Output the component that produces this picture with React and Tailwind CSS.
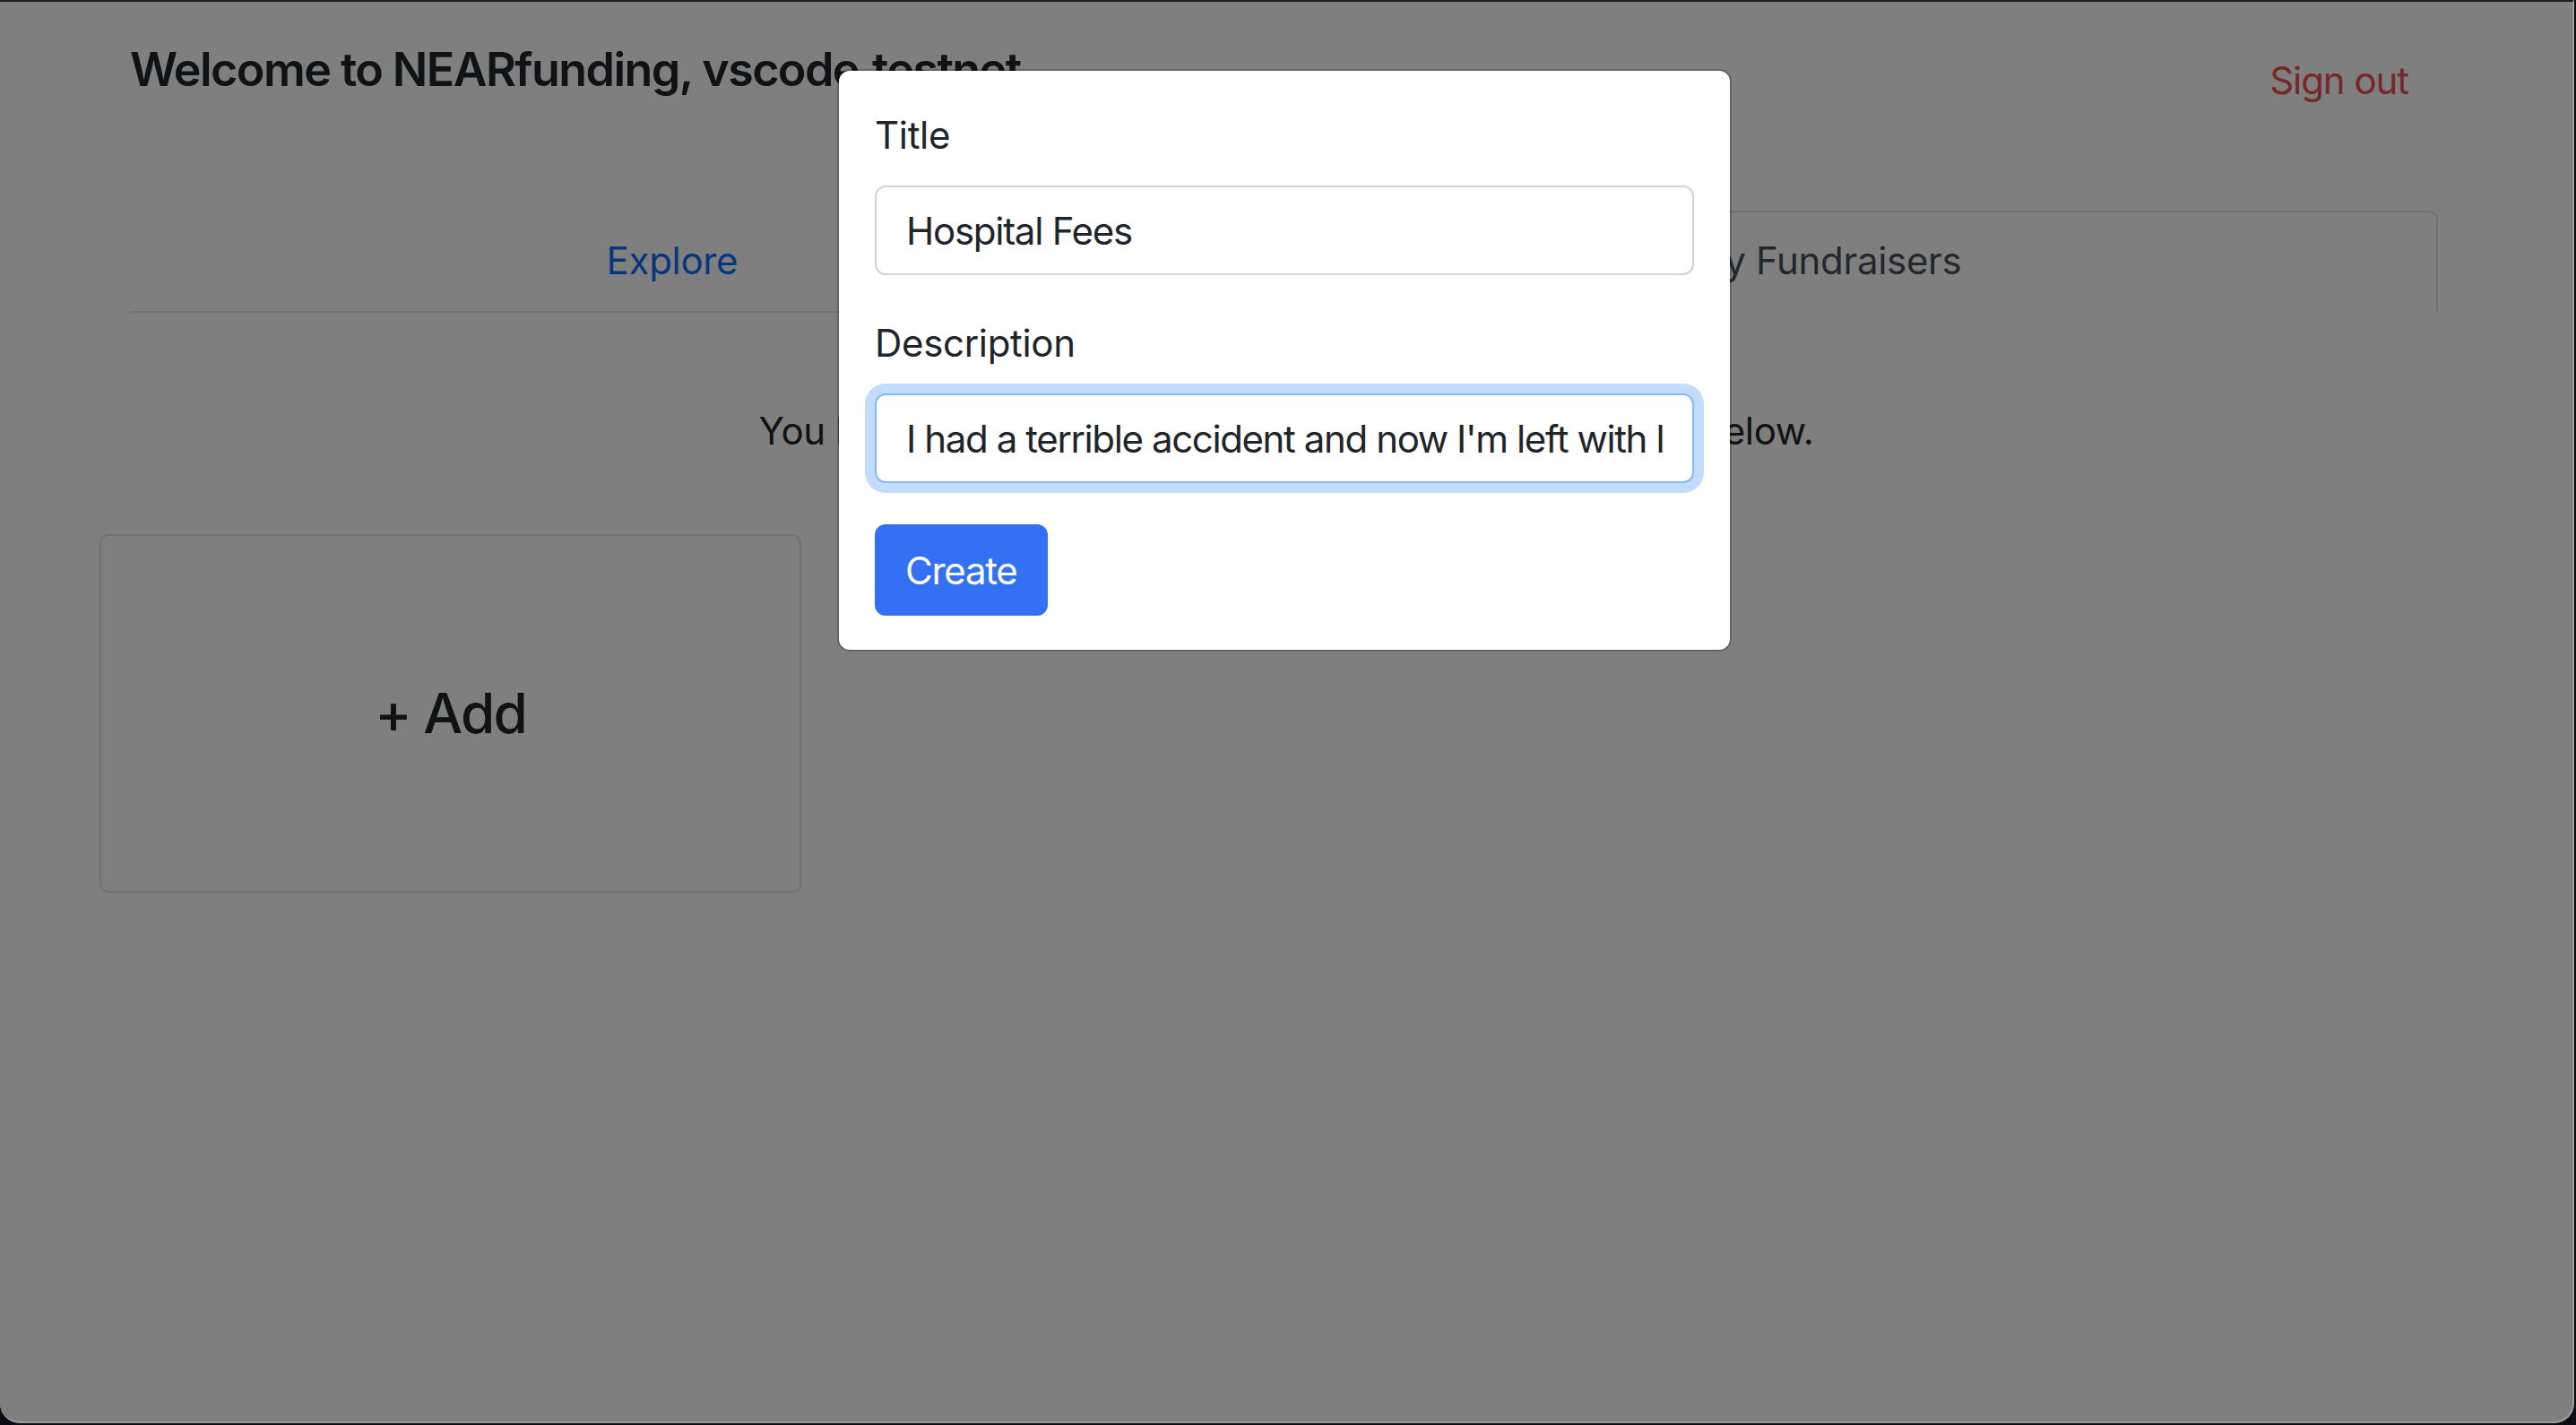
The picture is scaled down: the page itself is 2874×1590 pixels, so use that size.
export default function App() {
  return (
    <div className="w-[2874px] h-[1590px] bg-[#0b0f15] overflow-hidden font-[Inter,sans-serif] tracking-[-0.02em]">
      <div className="relative w-[2872px] h-[1588px] bg-white border-t-2 border-t-[#1c1c1c] border-r-2 border-b-2 border-r-[#9c9c9c] border-b-[#9c9c9c] rounded-br-[22px] rounded-bl-[22px] overflow-hidden">
        {/* Page */}
        <div className="flex items-start justify-between ml-[145px] w-[2575px] pt-[41px]">
          <h3 className="mt-[3px] text-[52px] leading-[64px] font-semibold tracking-[-0.03em] text-[#212529]">
            Welcome to NEARfunding, vscode.testnet
          </h3>
          <button className="px-[33px] py-[15px] text-[42px] leading-[63px] tracking-[-0.025em] text-[#ea5050]">
            Sign out
          </button>
        </div>

        <div className="flex ml-[145px] w-[2575px] mt-[99px] border-b-2 border-[#dee2e6]">
          <a className="flex-auto text-center px-[42px] pt-[22px] pb-[23px] text-[42px] leading-[63px] text-[#0d6efd] border-2 border-transparent">
            Explore
          </a>
          <a className="flex-auto text-center px-[42px] pt-[22px] pb-[23px] text-[42px] leading-[63px] text-[#495057] bg-white border-2 border-[#dee2e6] border-b-white rounded-t-[10px] -mb-[2px]">
            My Fundraisers
          </a>
        </div>

        <p className="mt-[100px] text-center text-[42px] leading-[63px] text-[#212529]">
          You have not created any fundraisers yet. Create one below.
        </p>

        <div className="mt-[84px] ml-[111px] w-[783px] h-[400px] border-2 border-[#dee2e6] rounded-[10px] flex items-center justify-center">
          <span className="text-[62px] leading-[74px] font-medium tracking-[-0.03em] text-[#212529]">+ Add</span>
        </div>

        {/* Backdrop */}
        <div className="absolute inset-0 bg-black/50"></div>

        {/* Modal */}
        <div className="absolute left-[934px] top-[75px] w-[998px] bg-white bg-clip-padding border-2 border-black/20 rounded-[14px] pt-[40px] pb-[38px] px-[40px] text-[#212529]">
          <label className="block text-[42px] leading-[63px]">Title</label>
          <input
            readOnly
            value="Hospital Fees"
            className="block mt-[25px] w-full h-[100px] px-[33px] text-[42px] leading-[63px] tracking-[-0.03em] text-[#212529] bg-white border-2 border-[#ced4da] rounded-[12px] outline-none"
          />
          <label className="block mt-[44px] text-[42px] leading-[63px]">Description</label>
          <input
            readOnly
            value="I had a terrible accident and now I'm left with large hospital bills to pay."
            className="block mt-[25px] w-full h-[100px] px-[33px] text-[42px] leading-[63px] tracking-[-0.033em] text-[#212529] bg-white border-2 border-[#86b7fe] rounded-[12px] outline-none shadow-[0_0_0_11px_rgba(13,110,253,0.25)]"
          />
          <button className="block mt-[46px] h-[102px] px-[34px] text-[42px] leading-[63px] tracking-[-0.03em] text-white bg-[#3370f4] rounded-[12px]">
            Create
          </button>
        </div>
      </div>
    </div>
  );
}
